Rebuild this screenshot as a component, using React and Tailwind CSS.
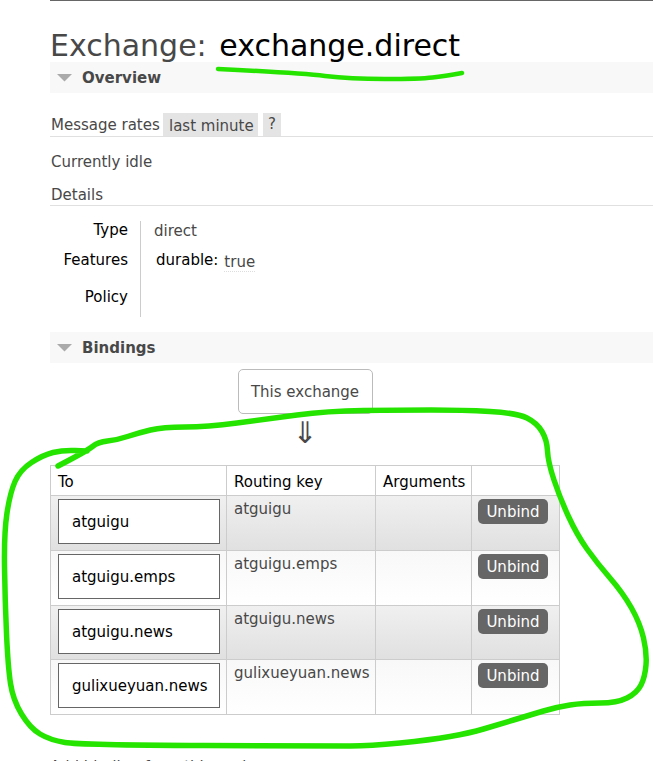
const loopPoints = [
  [58, 466], [87, 451], [98, 442], [117, 440], [138, 433], [163, 427], [207, 427], [267, 419], [327, 411],
  [400, 410], [463, 410], [517, 413], [537, 423], [547, 440], [548, 462], [560, 498], [577, 535], [597, 563],
  [623, 593], [640, 623], [647, 653], [645, 677], [637, 693], [617, 703], [583, 703], [557, 707], [530, 715],
  [497, 725], [470, 733], [430, 740], [370, 746], [330, 746], [80, 745], [50, 740], [30, 728], [13, 700],
  [8, 667], [5, 600], [4, 533], [10, 493], [20, 470], [43, 455], [63, 450], [87, 451],
];
const underlinePoints = [[218, 69], [300, 73], [350, 79], [420, 79], [445, 76], [462, 73]];

// smooth a hand drawn line through midpoints
function smoothPath(points) {
  let d = `M${points[0][0]} ${points[0][1]}`;
  for (let i = 1; i < points.length - 1; i++) {
    const mx = (points[i][0] + points[i + 1][0]) / 2;
    const my = (points[i][1] + points[i + 1][1]) / 2;
    d += ` Q${points[i][0]} ${points[i][1]} ${mx} ${my}`;
  }
  const last = points[points.length - 1];
  return `${d} L${last[0]} ${last[1]}`;
}

const bindings = ["atguigu", "atguigu.emps", "atguigu.news", "gulixueyuan.news"];

function SectionBar({ title }) {
  return (
    <div className="h-[31px] bg-[#f8f8f8] flex items-center">
      <svg width="15" height="9" viewBox="0 0 15 9" className="ml-[7px] mr-[10px]">
        <path d="M0 1H15L7.5 8.5Z" fill="#aaaaaa" />
      </svg>
      <h2 className="text-[15px] font-bold text-[#484848]">{title}</h2>
    </div>
  );
}

function DetailRow({ label, height, children }) {
  return (
    <div className="flex" style={{ height }}>
      <div className="w-[91px] pr-[12px] text-right text-black leading-[18px] border-r border-[#cccccc]">{label}</div>
      <div className="flex-1">{children}</div>
    </div>
  );
}

function BindingRow({ name, index }) {
  const bg = index % 2 === 0 ? "bg-gradient-to-b from-[#f0f0f0] to-[#e0e0e0]" : "bg-gradient-to-b from-[#f8f8f8] to-[#ffffff]";
  return (
    <tr className={`${bg} ${index === 2 ? "h-[54px]" : "h-[55px]"}`}>
      <td className="border border-[#cccccc] px-[7px] py-[3px] align-top">
        <div className="w-[162px] h-[45px] bg-white border border-[#666666] flex items-center pl-[13px] text-black pt-px">
          {name}
        </div>
      </td>
      <td className="border border-[#cccccc] px-[7px] pt-[3px] align-top text-[#484848]">{name}</td>
      <td className="border border-[#cccccc]" />
      <td className="border border-[#cccccc] px-[6px] pt-[3px] align-top">
        <button className="block w-[70px] h-[25px] rounded-[5px] bg-[#666666] text-white text-[15px] leading-[25px] pt-px">
          Unbind
        </button>
      </td>
    </tr>
  );
}

export default function App() {
  return (
    <div className="relative h-[761px] overflow-hidden bg-white pl-[50px] text-[15px] leading-[20px] text-[#484848] font-['DejaVu_Sans','Liberation_Sans',sans-serif]">
      <div className="h-px bg-[#666666]" />

      <h1 className="h-[61px] pt-[27px] text-[30px] leading-[36px] whitespace-nowrap">
        Exchange: <span className="text-black ml-[3px]">exchange.direct</span>
      </h1>
      <SectionBar title="Overview" />

      <div className="mt-[20px] h-[24px] flex border-b border-[#e0e0e0]">
        <span className="w-[113px] pl-px pt-[2px] whitespace-nowrap">Message rates</span>
        <span className="w-[95px] pl-[6px] h-[23px] pt-[3px] bg-[#e4e4e4] whitespace-nowrap">last minute</span>
        <span className="ml-[5px] w-[18px] h-[23px] pt-[1px] text-center bg-[#e4e4e4]">?</span>
      </div>

      <p className="mt-[15px] pl-px">Currently idle</p>
      <div className="mt-[13px] h-[21px] pl-px border-b border-[#e0e0e0]">Details</div>

      <div className="mt-[15px]">
        <DetailRow label="Type" height={30}>
          <span className="block pl-[13px]">direct</span>
        </DetailRow>
        <DetailRow label="Features" height={37}>
          <span className="block pl-[15px] leading-[18px]">
            <span className="text-black">durable:</span>
            <span className="ml-[6px] relative top-[2px] border-b border-dotted border-[#dddddd]">true</span>
          </span>
        </DetailRow>
        <DetailRow label="Policy" height={29} />
      </div>

      <div className="mt-[15px]">
        <SectionBar title="Bindings" />
      </div>

      <div className="w-[510px] flex flex-col items-center">
        <div className="mt-[6px] w-[135px] h-[45px] pt-px rounded-[5px] border border-[#bbbbbb] bg-white flex items-center justify-center">
          This exchange
        </div>
        <div className="h-[51px] pt-[4px] text-[30px] leading-[30px]">⇓</div>
      </div>

      <table className="w-[510px] table-fixed border-collapse">
        <thead>
          <tr className="h-[30px] text-black text-left">
            <th className="w-[176px] border border-[#cccccc] px-[7px] pt-[3px] font-normal">To</th>
            <th className="w-[149px] border border-[#cccccc] px-[7px] pt-[3px] font-normal">Routing key</th>
            <th className="w-[96px] border border-[#cccccc] px-[7px] pt-[3px] font-normal">Arguments</th>
            <th className="border border-[#cccccc]" />
          </tr>
        </thead>
        <tbody>
          {bindings.map((name, i) => (
            <BindingRow key={name} name={name} index={i} />
          ))}
        </tbody>
      </table>

      <p className="mt-[42px] whitespace-nowrap">Add binding from this exchange</p>

      {/* green marker annotations on top of the page */}
      <svg className="absolute left-0 top-0 pointer-events-none" width="653" height="761" fill="none" stroke="#25e400" strokeLinecap="round" strokeLinejoin="round">
        <path d={smoothPath(underlinePoints)} strokeWidth="4.5" />
        <path d={smoothPath(loopPoints)} strokeWidth="5.5" />
      </svg>
    </div>
  );
}
